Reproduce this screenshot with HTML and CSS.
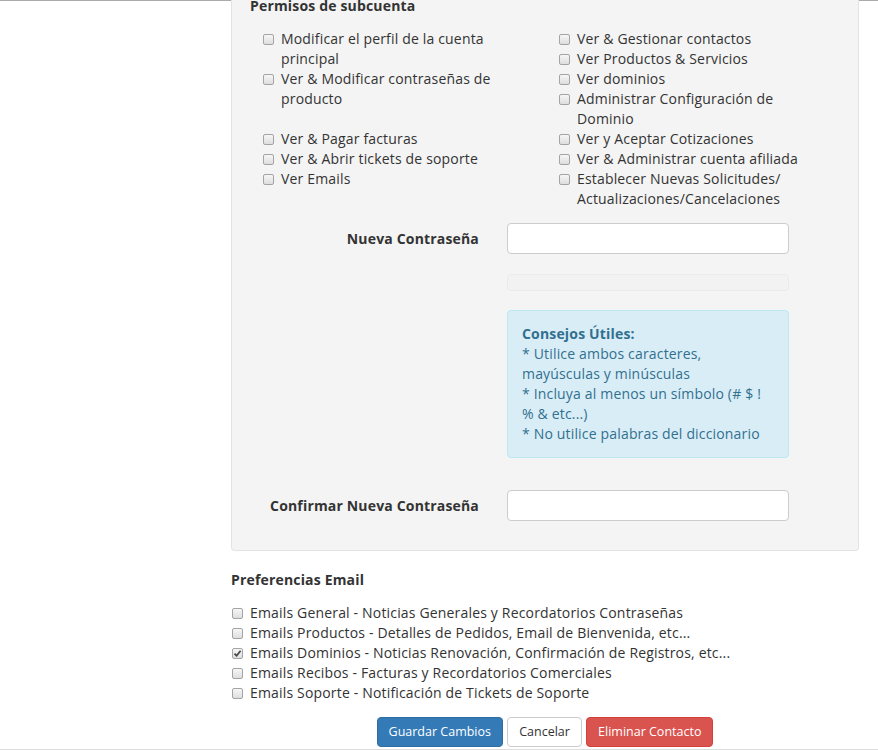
FILE: index.html
```html
<!DOCTYPE html>
<html lang="es">

<head>
    <meta charset="UTF-8">
    <meta name="viewport" content="width=device-width, initial-scale=1.0">
    <title>Editar contacto</title>
    <link rel="stylesheet" href="styles.css">
</head>

<body>
    <div class="top-edge"></div>
    <main class="content">
        <section class="well">
            <h4 class="well-title">Permisos de subcuenta</h4>
            <div class="perms">
                <ul class="perm-col">
                    <li><span class="cb"></span><span class="lbl">Modificar el perfil de la cuenta principal</span></li>
                    <li class="spaced"><span class="cb"></span><span class="lbl">Ver &amp; Modificar contraseñas de producto</span></li>
                    <li><span class="cb"></span><span class="lbl">Ver &amp; Pagar facturas</span></li>
                    <li><span class="cb"></span><span class="lbl">Ver &amp; Abrir tickets de soporte</span></li>
                    <li><span class="cb"></span><span class="lbl">Ver Emails</span></li>
                </ul>
                <ul class="perm-col">
                    <li><span class="cb"></span><span class="lbl">Ver &amp; Gestionar contactos</span></li>
                    <li><span class="cb"></span><span class="lbl">Ver Productos &amp; Servicios</span></li>
                    <li><span class="cb"></span><span class="lbl">Ver dominios</span></li>
                    <li><span class="cb"></span><span class="lbl">Administrar Configuración de Dominio</span></li>
                    <li><span class="cb"></span><span class="lbl">Ver y Aceptar Cotizaciones</span></li>
                    <li><span class="cb"></span><span class="lbl">Ver &amp; Administrar cuenta afiliada</span></li>
                    <li><span class="cb"></span><span class="lbl">Establecer Nuevas Solicitudes/<wbr>Actualizaciones/Cancelaciones</span></li>
                </ul>
            </div>

            <div class="form-row row-new">
                <label class="form-label" for="newPw">Nueva Contraseña</label>
                <input type="password" id="newPw" class="form-input">
            </div>
            <div class="form-row row-strength">
                <div></div>
                <div class="pw-strength"></div>
            </div>
            <div class="form-row row-tips">
                <div></div>
                <div class="alert-info">
                    <strong>Consejos Útiles:</strong><br>
                    * Utilice ambos caracteres, mayúsculas y minúsculas<br>
                    * Incluya al menos un símbolo (# $ ! % &amp; etc...)<br>
                    * No utilice palabras del diccionario
                </div>
            </div>
            <div class="form-row row-confirm">
                <label class="form-label" for="confirmPw">Confirmar Nueva Contraseña</label>
                <input type="password" id="confirmPw" class="form-input">
            </div>
        </section>

        <h4 class="section-title">Preferencias Email</h4>
        <ul class="email-prefs">
            <li><span class="cb"></span><span>Emails General - Noticias Generales y Recordatorios Contraseñas</span></li>
            <li><span class="cb"></span><span>Emails Productos - Detalles de Pedidos, Email de Bienvenida, etc...</span></li>
            <li><span class="cb checked"><svg width="9" height="9" viewBox="0 0 9 9"><path d="M1.5 4.6 L3.6 6.8 L7.6 1.8" fill="none" stroke="#444" stroke-width="1.7"/></svg></span><span>Emails Dominios - Noticias Renovación, Confirmación de Registros, etc...</span></li>
            <li><span class="cb"></span><span>Emails Recibos - Facturas y Recordatorios Comerciales</span></li>
            <li><span class="cb"></span><span>Emails Soporte - Notificación de Tickets de Soporte</span></li>
        </ul>

        <div class="actions">
            <button class="btn btn-primary">Guardar Cambios</button>
            <button class="btn btn-default">Cancelar</button>
            <button class="btn btn-danger">Eliminar Contacto</button>
        </div>
    </main>
    <div class="bottom-edge"></div>
</body>

</html>
```

FILE: styles.css
```css
body {
    font-family: 'Open Sans', 'Liberation Sans', sans-serif;
    font-size: 14px;
    line-height: 20px;
    letter-spacing: 0.17px;
    color: #333;
    background-color: #fff;
    margin: 0;
    padding: 0;
    overflow: hidden;
}

ul {
    list-style-type: none;
    margin: 0;
    padding: 0;
}

.top-edge {
    height: 1px;
    background-color: #aaa;
}

.content {
    margin-left: 231px;
    width: 628px;
}

/* panel gris */
.well {
    background-color: #f4f4f4;
    border: 1px solid #e3e3e3;
    border-top: none;
    border-radius: 0 0 4px 4px;
    padding: 0 19px 29px 19px;
}

.well-title,
.section-title {
    font-size: 14px;
    font-weight: 700;
    margin: 0;
    line-height: 20px;
}

.well-title {
    margin-top: -5px;
    margin-left: -1px;
}

.perms {
    display: flex;
    margin-top: 13px;
    padding-left: 12px;
}

.perm-col {
    flex: none;
    width: 296px;
}

.perm-col li,
.email-prefs li {
    display: flex;
    align-items: flex-start;
}

.perm-col li.spaced { margin-bottom: 20px; }

.lbl { max-width: 252px; }

.cb {
    flex: none;
    display: flex;
    align-items: center;
    justify-content: center;
    box-sizing: border-box;
    width: 11px;
    height: 11px;
    margin: 5px 7px 0 0;
    border: 1px solid #a4a4a4;
    border-radius: 2px;
    background: linear-gradient(#f6f6f6, #dedede);
}

.cb.checked svg { display: block; }

.form-row {
    display: grid;
    grid-template-columns: 228px 282px;
    column-gap: 28px;
}

.row-new { margin-top: 14px; }
.row-strength { margin-top: 20px; }
.row-tips { margin-top: 19px; }
.row-confirm { margin-top: 32px; }

.form-label {
    font-weight: 700;
    text-align: right;
    align-self: center;
}

.form-input {
    box-sizing: border-box;
    height: 31px;
    border: 1px solid #ccc;
    border-radius: 4px;
    background-color: #fff;
    padding: 5px 12px;
    font: inherit;
}

.pw-strength {
    height: 17px;
    box-sizing: border-box;
    background-color: #f2f2f2;
    border: 1px solid #ebebeb;
    border-radius: 4px;
}

.alert-info {
    background-color: #d9edf7;
    border: 1px solid #bce8f1;
    border-radius: 4px;
    color: #31708f;
    padding: 13px 14px;
}

.section-title { margin-top: 19px; }

.email-prefs {
    margin-top: 13px;
    padding-left: 1px;
}

.actions {
    margin-top: 14px;
    text-align: center;
    font-size: 0;
}

.btn {
    font-family: inherit;
    font-size: 12.5px;
    letter-spacing: 0;
    line-height: 20px;
    height: 30px;
    padding: 4px 11px;
    border: 1px solid transparent;
    border-radius: 4px;
    margin: 0 2px;
    cursor: pointer;
}

.btn-primary { background-color: #337ab7; border-color: #2e6da4; color: #fff; }
.btn-default { background-color: #fff; border-color: #ccc; color: #333; }
.btn-danger { background-color: #d9534f; border-color: #d43f3a; color: #fff; }

.bottom-edge {
    margin-top: 2px;
    border-top: 1px solid #ddd;
}
```
